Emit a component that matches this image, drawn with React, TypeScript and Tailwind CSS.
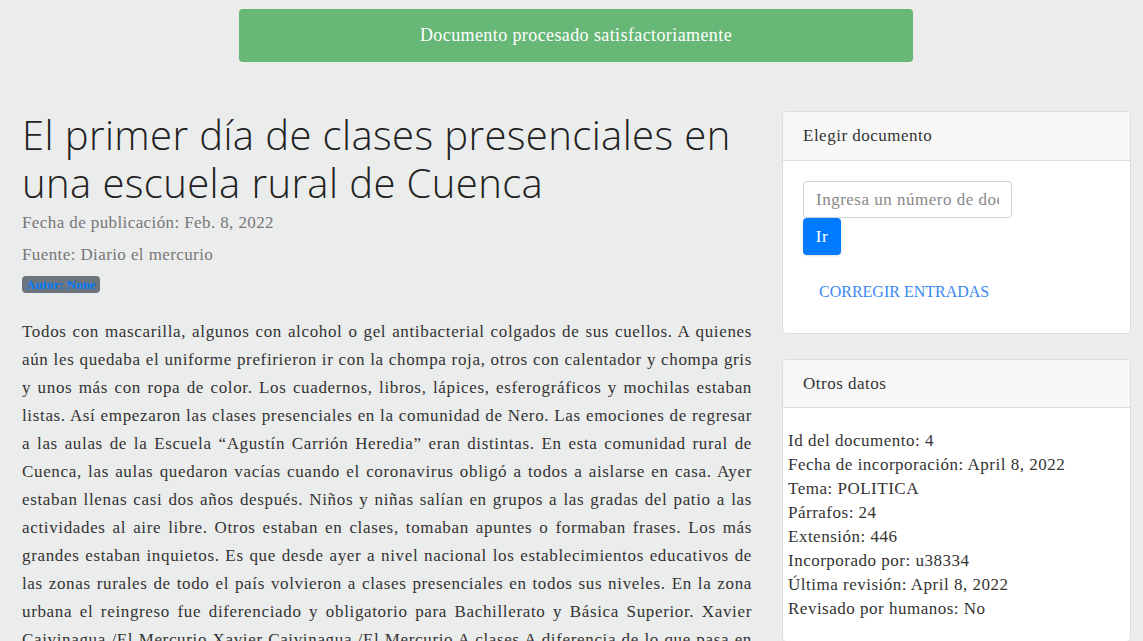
const body =
  'Todos con mascarilla, algunos con alcohol o gel antibacterial colgados de sus cuellos. A quienes aún les quedaba el uniforme prefirieron ir con la chompa roja, otros con calentador y chompa gris y unos más con ropa de color. Los cuadernos, libros, lápices, esferográficos y mochilas estaban listas. Así empezaron las clases presenciales en la comunidad de Nero. Las emociones de regresar a las aulas de la Escuela “Agustín Carrión Heredia” eran distintas. En esta comunidad rural de Cuenca, las aulas quedaron vacías cuando el coronavirus obligó a todos a aislarse en casa. Ayer estaban llenas casi dos años después. Niños y niñas salían en grupos a las gradas del patio a las actividades al aire libre. Otros estaban en clases, tomaban apuntes o formaban frases. Los más grandes estaban inquietos. Es que desde ayer a nivel nacional los establecimientos educativos de las zonas rurales de todo el país volvieron a clases presenciales en todos sus niveles. En la zona urbana el reingreso fue diferenciado y obligatorio para Bachillerato y Básica Superior. Xavier Caivinagua /El Mercurio Xavier Caivinagua /El Mercurio A clases A diferencia de lo que pasa en las ciudades, en el campo los estudiantes volvieron con entusiasmo a sus aulas y compartieron con sus compañeros después de mucho tiempo.';

const datos = [
  'Id del documento: 4',
  'Fecha de incorporación: April 8, 2022',
  'Tema: POLITICA',
  'Párrafos: 24',
  'Extensión: 446',
  'Incorporado por: u38334',
  'Última revisión: April 8, 2022',
  'Revisado por humanos: No',
];

function App() {
  return (
    <div className="min-h-screen bg-[#ebecec] font-['Liberation_Serif',serif] text-[#333] tracking-[0.5px]">
      <div className="pt-[9px]">
        <div className="ml-[239px] w-[674px] h-[53px] rounded bg-[#67b776] text-white flex items-center justify-center text-[18px] tracking-[0.4px]">
          Documento procesado satisfactoriamente
        </div>
      </div>

      <div className="flex gap-[30px] pl-[22px] pr-[12px] pt-[49px]">
        <main className="w-[730px] shrink-0">
          <h1 className="font-['Open_Sans',sans-serif] font-light text-[40px] leading-[48px] tracking-[0.4px] text-[#222]">
            El primer día de clases presenciales en una escuela rural de Cuenca
          </h1>
          <p className="mt-1 text-[17px] leading-6 tracking-[0.4px] text-[#777]">Fecha de publicación: Feb. 8, 2022</p>
          <p className="mt-2 text-[17px] leading-6 tracking-[0.4px] text-[#777]">Fuente: Diario el mercurio</p>
          <span className="inline-block mt-[9px] px-1 h-[17px] leading-[17px] rounded bg-[#6c757d] text-[#007bff] text-[13px] font-bold tracking-normal">
            Autor: None
          </span>
          <p className="mt-[22px] text-[17px] leading-7 tracking-[0.65px] text-justify text-[#333]">{body}</p>
        </main>

        <aside className="w-[349px] shrink-0 flex flex-col gap-[25px]">
          <section className="bg-white border border-[#dcdcdc] rounded">
            <div className="h-[49px] px-5 flex items-center bg-[#f7f7f7] border-b border-[#dcdcdc] rounded-t text-[17px]">
              Elegir documento
            </div>
            <div className="px-5 pt-5 pb-[18px]">
              <input
                className="block w-[209px] h-[37px] px-3 border border-[#ced4da] rounded bg-white text-[17px] placeholder:text-[#888] outline-none"
                placeholder="Ingresa un número de documento"
              />
              <button className="block w-[38px] h-[37px] rounded bg-[#007bff] text-white text-[17px] shadow">Ir</button>
              <button className="block mt-[13px] ml-4 h-[47px] text-[#3a86f0] text-[16px] tracking-normal uppercase">
                Corregir entradas
              </button>
            </div>
          </section>

          <section className="bg-white border border-[#dcdcdc] rounded">
            <div className="h-[48px] px-5 flex items-center bg-[#f7f7f7] border-b border-[#dcdcdc] rounded-t text-[17px]">
              Otros datos
            </div>
            <div className="px-[5px] pt-[21px] pb-5 text-[17px] leading-6 text-[#333]">
              {datos.map((d) => (
                <div key={d}>{d}</div>
              ))}
            </div>
          </section>
        </aside>
      </div>
    </div>
  );
}

export default App;
